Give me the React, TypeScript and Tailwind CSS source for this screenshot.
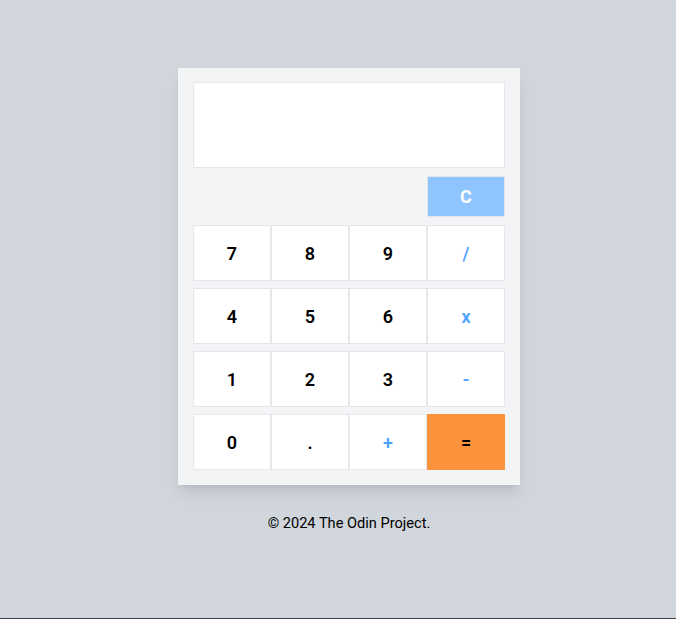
const rows: { label: string; kind: "num" | "op" | "eq" }[][] = [
  [
    { label: "7", kind: "num" },
    { label: "8", kind: "num" },
    { label: "9", kind: "num" },
    { label: "/", kind: "op" },
  ],
  [
    { label: "4", kind: "num" },
    { label: "5", kind: "num" },
    { label: "6", kind: "num" },
    { label: "x", kind: "op" },
  ],
  [
    { label: "1", kind: "num" },
    { label: "2", kind: "num" },
    { label: "3", kind: "num" },
    { label: "-", kind: "op" },
  ],
  [
    { label: "0", kind: "num" },
    { label: ".", kind: "num" },
    { label: "+", kind: "op" },
    { label: "=", kind: "eq" },
  ],
];

const CalcButton = ({ label, kind }: { label: string; kind: string }) => {
  const styles =
    kind === "eq"
      ? "bg-[#fb923c] border-[#fb923c] text-black"
      : kind === "op"
      ? "bg-white border-gray-200 text-blue-400"
      : "bg-white border-gray-200 text-black";
  return (
    <button
      className={`flex items-center justify-center h-[56px] border text-[18px] font-semibold ${styles}`}
    >
      {label}
    </button>
  );
};

export default function App() {
  return (
    <div className="h-[619px] bg-gray-300 border-b border-[#3f4148] font-['Roboto',sans-serif] overflow-hidden">
      <div className="flex flex-col items-center pt-[68px] pl-[22px]">
        <div className="w-[342px] bg-gray-100 px-[15px] pt-[14px] pb-[15px] shadow-lg">
          <div className="h-[86px] bg-white border border-gray-200"></div>
          <div className="flex justify-end mt-[8px]">
            <button className="w-[78px] h-[41px] bg-blue-300 border border-gray-200 text-white text-[18px] font-bold">
              C
            </button>
          </div>
          <div className="flex flex-col gap-[7px] mt-[8px]">
            {rows.map((row, i) => (
              <div key={i} className="grid grid-cols-4">
                {row.map((b) => (
                  <CalcButton key={b.label} label={b.label} kind={b.kind} />
                ))}
              </div>
            ))}
          </div>
        </div>
        <p className="mt-[27px] text-[14.6px] leading-[22px] font-normal text-black">
          © 2024 The Odin Project.
        </p>
      </div>
    </div>
  );
}
